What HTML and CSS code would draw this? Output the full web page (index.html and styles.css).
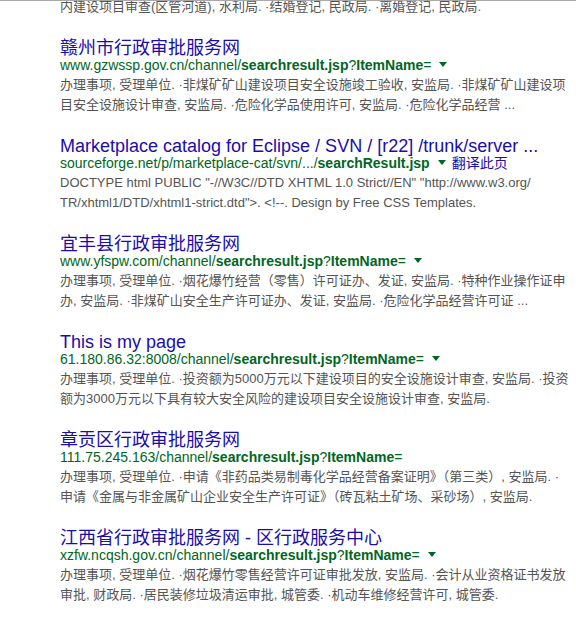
FILE: index.html
```html
<!DOCTYPE html>
<html>
<head>
<meta charset="utf-8">
<link rel="stylesheet" href="styles.css">
</head>
<body>
<div class="topline"></div>
<div class="results">
  <div class="result first">
    <div class="snippet">内建设项目审查(区管河道), 水利局. ·结婚登记, 民政局. ·离婚登记, 民政局.</div>
  </div>

  <div class="result">
    <div class="title">赣州市行政审批服务网</div>
    <div class="url">www.gzwssp.gov.cn/channel/<b>searchresult.jsp</b>?<b>ItemName</b>=<span class="arrow"></span></div>
    <div class="snippet">办理事项, 受理单位. ·非煤矿矿山建设项目安全设施竣工验收, 安监局. ·非煤矿矿山建设项<br>目安全设施设计审查, 安监局. ·危险化学品使用许可, 安监局. ·危险化学品经营 ...</div>
  </div>

  <div class="result">
    <div class="title">Marketplace catalog for Eclipse / SVN / [r22] /trunk/server ...</div>
    <div class="url">sourceforge.net/p/marketplace-cat/svn/.../<b>searchResult.jsp</b><span class="arrow"></span><span class="translate">翻译此页</span></div>
    <div class="snippet">DOCTYPE html PUBLIC "-//W3C//DTD XHTML 1.0 Strict//EN" "http://www.w3.org/<br>TR/xhtml1/DTD/xhtml1-strict.dtd"&gt;. &lt;!--. Design by Free CSS Templates.</div>
  </div>

  <div class="result">
    <div class="title">宜丰县行政审批服务网</div>
    <div class="url">www.yfspw.com/channel/<b>searchresult.jsp</b>?<b>ItemName</b>=<span class="arrow"></span></div>
    <div class="snippet">办理事项, 受理单位. ·烟花爆竹经营（零售）许可证办、发证, 安监局. ·特种作业操作证申<br>办, 安监局. ·非煤矿山安全生产许可证办、发证, 安监局. ·危险化学品经营许可证 ...</div>
  </div>

  <div class="result">
    <div class="title">This is my page</div>
    <div class="url">61.180.86.32:8008/channel/<b>searchresult.jsp</b>?<b>ItemName</b>=<span class="arrow"></span></div>
    <div class="snippet">办理事项, 受理单位. ·投资额为5000万元以下建设项目的安全设施设计审查, 安监局. ·投资<br>额为3000万元以下具有较大安全风险的建设项目安全设施设计审查, 安监局.</div>
  </div>

  <div class="result">
    <div class="title">章贡区行政审批服务网</div>
    <div class="url">111.75.245.163/channel/<b>searchresult.jsp</b>?<b>ItemName</b>=</div>
    <div class="snippet">办理事项, 受理单位. ·申请《非药品类易制毒化学品经营备案证明》（第三类）, 安监局. ·<br>申请《金属与非金属矿山企业安全生产许可证》（砖瓦粘土矿场、采砂场）, 安监局.</div>
  </div>

  <div class="result">
    <div class="title">江西省行政审批服务网 - 区行政服务中心</div>
    <div class="url">xzfw.ncqsh.gov.cn/channel/<b>searchresult.jsp</b>?<b>ItemName</b>=<span class="arrow"></span></div>
    <div class="snippet">办理事项, 受理单位. ·烟花爆竹零售经营许可证审批发放, 安监局. ·会计从业资格证书发放<br>审批, 财政局. ·居民装修垃圾清运审批, 城管委. ·机动车维修经营许可, 城管委.</div>
  </div>
</div>
</body>
</html>
```

FILE: styles.css
```css
html, body {
  margin: 0;
  padding: 0;
  background: #ffffff;
}

body {
  font-family: "Liberation Sans", Arial, "Noto Sans CJK SC", sans-serif;
  overflow: hidden;
}

.topline {
  position: fixed;
  top: 0;
  left: 0;
  right: 0;
  height: 1px;
  background: #a9a9a9;
  z-index: 2;
}

.results {
  padding-left: 60px;
  display: flex;
  flex-direction: column;
}

.result {
  margin-bottom: 22.5px;
}

.result.first {
  margin-top: -3.5px;
}

.title {
  font-size: 18px;
  line-height: 19px;
  color: #1a0dab;
  white-space: nowrap;
}

.url {
  font-size: 14px;
  line-height: 15px;
  color: #006621;
  white-space: nowrap;
}

.url b {
  font-weight: bold;
}

.arrow {
  display: inline-block;
  width: 0;
  height: 0;
  border-style: solid;
  border-width: 5px 4px 0 4px;
  border-color: #006621 transparent transparent transparent;
  margin-left: 8px;
  vertical-align: 3px;
}

.translate {
  color: #1a0dab;
  margin-left: 6px;
}

.snippet {
  margin-top: 1.5px;
  font-size: 13px;
  line-height: 20px;
  color: #545454;
  white-space: nowrap;
}

.first .snippet {
  margin-top: 0;
}
```
